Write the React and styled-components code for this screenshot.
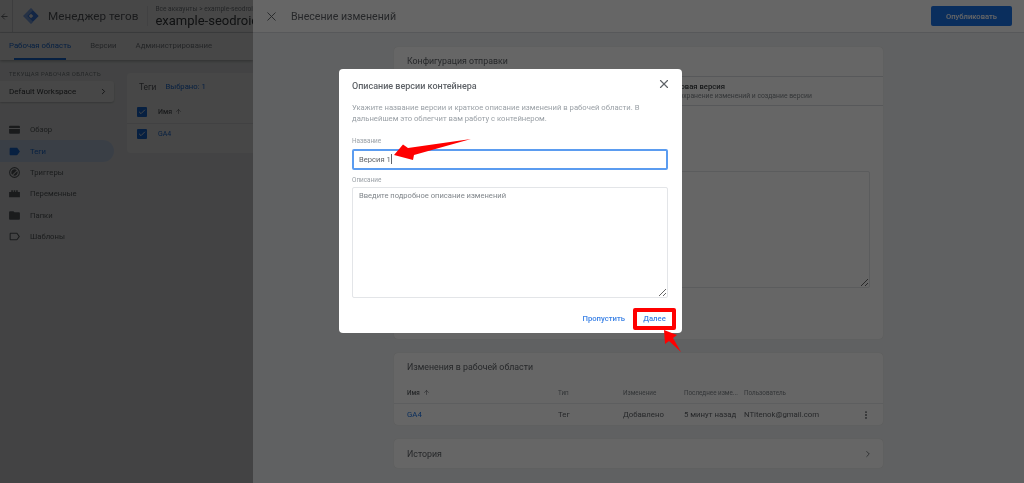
import React from "react";
import styled, { createGlobalStyle } from "styled-components";
import { X, ArrowLeft, ArrowUp, ChevronRight, MoreVertical, Check } from "lucide-react";

const GlobalStyle = createGlobalStyle`
  html, body { margin: 0; padding: 0; height: 100%; }
  body { font-family: Roboto, "Liberation Sans", sans-serif; color: #3c4043; overflow: hidden; }
  * { box-sizing: border-box; }
`;

const Page = styled.div`
  position: relative;
  width: 1024px;
  height: 483px;
  display: grid;
  grid-template-columns: 253px 1fr;
  overflow: hidden;
  filter: blur(0.35px);
`;

const Scrim = styled.div`
  position: absolute;
  inset: 0;
  background: rgba(0, 0, 0, ${(p) => p.$alpha});
`;

/* left: tag manager behind the drawer */
const Workspace = styled.div`
  position: relative;
  background: #f1f3f4;
  overflow: hidden;
`;

const TopBar = styled.div`
  height: 33px;
  display: flex;
  align-items: center;
  background: #fff;
  border-bottom: 1px solid #dadce0;
  white-space: nowrap;
`;

const BackCell = styled.div`
  width: 13px;
  height: 33px;
  flex: none;
  display: flex;
  align-items: center;
  border-right: 1px solid #dadce0;
  color: #5f6368;
`;

const Logo = styled.svg`
  width: 16px;
  height: 16px;
  margin-left: 10px;
  flex: none;
`;

const Product = styled.div`
  margin-left: 9px;
  padding-right: 9px;
  font-size: 11.7px;
  color: #5f6368;
  line-height: 20px;
  border-right: 1px solid #e8eaed;
`;

const Crumbs = styled.div`
  margin-left: 7px;
  display: flex;
  flex-direction: column;
`;

const CrumbTrail = styled.div`
  font-size: 6.6px;
  line-height: 8px;
  color: #80868b;
`;

const CrumbName = styled.div`
  font-size: 13px;
  line-height: 15px;
  color: #3c4043;
`;

const Tabs = styled.div`
  height: 27px;
  display: flex;
  background: #fff;
  padding-left: 9px;
  gap: 19px;
  box-shadow: 0 1px 3px rgba(0, 0, 0, 0.3);
  position: relative;
`;

const Tab = styled.div`
  position: relative;
  font-size: 7.8px;
  line-height: 26px;
  color: ${(p) => (p.$active ? "#1a73e8" : "#80868b")};
  &::after {
    content: "";
    display: ${(p) => (p.$active ? "block" : "none")};
    position: absolute;
    left: 5px;
    right: 5px;
    bottom: 0;
    height: 2px;
    background: #1a73e8;
  }
`;

const WorkBody = styled.div`
  display: flex;
  align-items: flex-start;
`;

const SideColumn = styled.div`
  width: 114px;
  flex: none;
  padding-top: 10px;
`;

const SideLabel = styled.div`
  font-size: 5.9px;
  line-height: 8px;
  letter-spacing: 0.35px;
  padding-left: 9px;
  color: #80868b;
  white-space: nowrap;
`;

const WorkspacePicker = styled.div`
  height: 21px;
  margin-top: 3px;
  padding: 0 6px 0 9px;
  display: flex;
  align-items: center;
  justify-content: space-between;
  background: #fff;
  border-radius: 0 3px 3px 0;
  box-shadow: 0 1px 2px rgba(0, 0, 0, 0.2);
  font-size: 8px;
  color: #3c4043;
`;

const SideNav = styled.div`
  margin-top: 17px;
  display: flex;
  flex-direction: column;
`;

const NavItem = styled.div`
  height: 21.4px;
  display: flex;
  align-items: center;
  gap: 9px;
  padding-left: 8px;
  font-size: 7.7px;
  color: ${(p) => (p.$active ? "#1a73e8" : "#5f6368")};
  background: ${(p) => (p.$active ? "#d2e3fc" : "transparent")};
  border-radius: 0 11px 11px 0;
  svg { width: 13px; height: 13px; flex: none; fill: currentColor; }
`;

const TagsCard = styled.div`
  width: 200px;
  margin: 13px 0 0 13px;
  background: #fff;
  border-radius: 4px;
  flex: none;
  padding-bottom: 9px;
`;

const TagsHead = styled.div`
  height: 27px;
  padding: 0 12px;
  display: flex;
  align-items: center;
  gap: 9px;
  font-size: 8.4px;
  color: #5f6368;
`;

const Selected = styled.span`
  font-size: 7.7px;
  color: #1a73e8;
`;

const TagRow = styled.div`
  height: ${(p) => p.$h}px;
  display: flex;
  align-items: center;
  gap: 11px;
  padding-left: 10px;
  font-size: 7px;
  font-weight: ${(p) => (p.$head ? 500 : 400)};
  color: ${(p) => (p.$head ? "#5f6368" : "#1a73e8")};
  border-bottom: ${(p) => (p.$head ? "1px solid #e8eaed" : "none")};
`;

const CheckBox = styled.span`
  width: 10px;
  height: 10px;
  display: flex;
  align-items: center;
  justify-content: center;
  border-radius: 1px;
  background: #1a73e8;
  color: #fff;
`;

const SortLabel = styled.span`
  display: inline-flex;
  align-items: center;
  gap: 3px;
`;

/* right: submit drawer */
const Drawer = styled.div`
  position: relative;
  background: #f1f3f4;
  height: 483px;
`;

const DrawerHead = styled.div`
  height: 33px;
  display: flex;
  align-items: center;
  padding: 0 12px 0 11px;
  background: #fff;
  border-bottom: 1px solid #dadce0;
  color: #5f6368;
`;

const DrawerTitle = styled.div`
  margin: 1px 0 0 12px;
  font-size: 10.6px;
  color: #5f6368;
  flex: 1;
`;

const Publish = styled.button`
  width: 81px;
  height: 20px;
  border: 0;
  border-radius: 2px;
  background: #1a73e8;
  color: #fff;
  font: 500 7.6px Roboto, sans-serif;
`;

const DrawerBody = styled.div`
  width: 489px;
  margin: 14px auto 0;
  display: flex;
  flex-direction: column;
  gap: 14px;
`;

const Card = styled.section`
  background: #fff;
  border-radius: 4px;
  box-shadow: 0 0 1px rgba(0, 0, 0, 0.15);
  height: ${(p) => p.$h}px;
`;

const CardTitle = styled.div`
  height: ${(p) => p.$h}px;
  padding: 0 13px ${(p) => (p.$flat ? 0 : 2)}px;
  display: flex;
  align-items: center;
  justify-content: space-between;
  font-size: 8.8px;
  color: #5f6368;
`;

const VersionChoice = styled.div`
  height: 30px;
  padding-left: 281px;
  border-top: 1px solid #dadce0;
  border-bottom: 1px solid #dadce0;
  display: flex;
  flex-direction: column;
  justify-content: center;
`;

const ChoiceName = styled.div`
  font-size: 7.7px;
  font-weight: 500;
  line-height: 10px;
  color: #3c4043;
`;

const ChoiceHint = styled.div`
  font-size: 6.8px;
  line-height: 9px;
  color: #80868b;
`;

const BackNotes = styled.textarea`
  display: block;
  width: 463px;
  height: 117px;
  margin: 65px 0 0 13px;
  border: 1px solid #e3e5e8;
  border-radius: 2px;
  background: #fff;
`;

const ChangeGrid = styled.div`
  display: grid;
  grid-template-columns: 151px 65px 61px 60px 1fr 16px;
  align-items: center;
  height: ${(p) => p.$h}px;
  padding: 0 9px 0 13px;
  font-size: ${(p) => (p.$head ? "6.3px" : "7.8px")};
  color: ${(p) => (p.$head ? "#80868b" : "#5f6368")};
  border-bottom: ${(p) => (p.$head ? "1px solid #e8eaed" : "none")};
  white-space: nowrap;
`;

const NameHead = styled(SortLabel)`
  font-weight: 500;
  color: #5f6368;
`;

const BlueLink = styled.span`
  color: #1a73e8;
`;

const RowMenu = styled(MoreVertical)`
  justify-self: center;
`;

const HistoryChevron = styled(ChevronRight)`
  margin-right: -3px;
  color: #5f6368;
`;

/* dialog */
const Modal = styled.div`
  position: absolute;
  left: 339px;
  top: 69px;
  width: 343px;
  height: 264px;
  padding: 0 14px 0 13px;
  background: #fff;
  border-radius: 4px;
  display: flex;
  flex-direction: column;
`;

const ModalHead = styled.div`
  height: 33px;
  flex: none;
  display: flex;
  align-items: center;
  justify-content: space-between;
  font-size: 9px;
  font-weight: 500;
  color: #5f6368;
`;

const CloseIcon = styled(X)`
  color: #5f6368;
  margin: 0 -3px 3px 0;
`;

const Intro = styled.p`
  margin: 0;
  font-size: 7.7px;
  line-height: 11.4px;
  color: #9aa0a6;
`;

const FieldLabel = styled.label`
  display: block;
  font-size: 6.4px;
  line-height: 8px;
  color: #9aa0a6;
  margin-top: ${(p) => p.$top}px;
  margin-bottom: ${(p) => p.$bottom}px;
`;

const NameField = styled.div`
  height: 21px;
  flex: none;
  padding: 0 5px;
  display: flex;
  align-items: center;
  border: 2px solid #5b9cf0;
  border-radius: 2px;
  font-size: 7.6px;
  color: #5f6368;
`;

const Caret = styled.span`
  width: 1px;
  height: 10px;
  background: #5f6368;
`;

const Notes = styled.textarea`
  display: block;
  flex: none;
  width: 100%;
  height: 111px;
  padding: 2px 6px;
  border: 1px solid #e3e5e8;
  border-radius: 2px;
  outline: none;
  font: 7.6px/11px Roboto, sans-serif;
  &::placeholder { color: #80868b; opacity: 1; }
`;

const ModalFoot = styled.div`
  display: flex;
  justify-content: flex-end;
  align-items: center;
  gap: 8px;
  margin: 10px -8px 0 0;
  font-size: 7.7px;
  font-weight: 500;
  color: #3b82e6;
`;

const NextButton = styled.div`
  width: 43px;
  height: 22px;
  display: flex;
  align-items: center;
  justify-content: center;
  border: 4px solid #f00;
  border-radius: 2px;
  background: #fff;
`;

const Pointer = styled.svg`
  position: absolute;
  left: ${(p) => p.$x}px;
  top: ${(p) => p.$y}px;
  width: ${(p) => p.$w}px;
  height: ${(p) => p.$h}px;
`;

const navIcons = {
  overview: <path d="M2 9V6.500C2 5.700 2.700 5 3.500 5h17c.8 0 1.500.7 1.500 1.500V9H2zm0 2h20v7.500c0 .8-.7 1.500-1.500 1.500h-17C2.700 20 2 19.300 2 18.500V11z" />,
  tag: <path d="M17.630 5.840C17.270 5.330 16.670 5 16 5L5 5.010C3.900 5.010 3 5.900 3 7v10c0 1.100.9 1.990 2 1.990L16 19c.67 0 1.270-.33 1.630-.84L22 12l-4.370-6.160z" />,
  trigger: <path fillRule="evenodd" d="M12 2a10 10 0 1 0 0 20 10 10 0 0 0 0-20zm0 2a8 8 0 1 1 0 16 8 8 0 0 1 0-16zm0 2a6 6 0 0 0-4.200 10.300l8.500-8.500A6 6 0 0 0 12 6zm5.300 3.300-8 8A6 6 0 0 0 17.300 9.300z" />,
  variable: <path d="M2 9h4V6h3v3h1.500V6h3v3H15V6h3v3h4v10H2V9z" />,
  folder: <path d="M10 4H4c-1.100 0-1.990.9-1.990 2L2 18c0 1.100.9 2 2 2h16c1.100 0 2-.9 2-2V8c0-1.100-.9-2-2-2h-8l-2-2z" />,
  template: <path d="M17.630 5.840C17.270 5.330 16.670 5 16 5L5 5.010C3.900 5.010 3 5.900 3 7v10c0 1.100.9 1.990 2 1.990L16 19c.67 0 1.270-.33 1.630-.84L22 12l-4.370-6.160zM16 17H5V7h11l3.550 5L16 17z" />,
};

const navItems = [
  ["overview", "Обзор"],
  ["tag", "Теги"],
  ["trigger", "Триггеры"],
  ["variable", "Переменные"],
  ["folder", "Папки"],
  ["template", "Шаблоны"],
];

export default function App() {
  return (
    <>
      <GlobalStyle />
      <Page>
        <Workspace>
          <TopBar>
            <BackCell>
              <ArrowLeft size={9} strokeWidth={2.2} />
            </BackCell>
            <Logo viewBox="0 0 24 24">
              <path d="M12 0.500 23.500 12 12 23.500 0.500 12z" fill="#4285f4" />
              <path d="M12 0.500 15 3.500 6.500 12 15 20.500 12 23.500 0.500 12z" fill="#8ab4f8" />
              <path d="M12 8.500 15.500 12 12 15.500 8.500 12z" fill="#fff" />
            </Logo>
            <Product>Менеджер тегов</Product>
            <Crumbs>
              <CrumbTrail>Все аккаунты &gt; example-seodroid.ru</CrumbTrail>
              <CrumbName>example-seodroid.ru</CrumbName>
            </Crumbs>
          </TopBar>
          <Tabs>
            <Tab $active>Рабочая область</Tab>
            <Tab>Версии</Tab>
            <Tab>Администрирование</Tab>
          </Tabs>
          <WorkBody>
            <SideColumn>
              <SideLabel>ТЕКУЩАЯ РАБОЧАЯ ОБЛАСТЬ</SideLabel>
              <WorkspacePicker>
                Default Workspace
                <ChevronRight size={9} strokeWidth={2.5} />
              </WorkspacePicker>
              <SideNav>
                {navItems.map(([key, label]) => (
                  <NavItem key={key} $active={key === "tag"}>
                    <svg viewBox="0 0 24 24">{navIcons[key]}</svg>
                    {label}
                  </NavItem>
                ))}
              </SideNav>
            </SideColumn>
            <TagsCard>
              <TagsHead>
                Теги <Selected>Выбрано: 1</Selected>
              </TagsHead>
              <TagRow $h={24} $head>
                <CheckBox><Check size={8} strokeWidth={3} /></CheckBox>
                <SortLabel>Имя <ArrowUp size={7} /></SortLabel>
              </TagRow>
              <TagRow $h={20}>
                <CheckBox><Check size={8} strokeWidth={3} /></CheckBox>
                GA4
              </TagRow>
            </TagsCard>
          </WorkBody>
          <Scrim $alpha={0.3} />
        </Workspace>

        <Drawer>
          <DrawerHead>
            <X size={15} strokeWidth={1.5} />
            <DrawerTitle>Внесение изменений</DrawerTitle>
            <Publish>Опубликовать</Publish>
          </DrawerHead>
          <DrawerBody>
            <Card $h={292}>
              <CardTitle $h={29}>Конфигурация отправки</CardTitle>
              <VersionChoice>
                <ChoiceName>Новая версия</ChoiceName>
                <ChoiceHint>Сохранение изменений и создание версии</ChoiceHint>
              </VersionChoice>
              <BackNotes disabled />
            </Card>
            <Card $h={72}>
              <CardTitle $h={29}>Изменения в рабочей области</CardTitle>
              <ChangeGrid $h={22} $head>
                <NameHead>Имя <ArrowUp size={7} /></NameHead>
                <span>Тип</span>
                <span>Изменение</span>
                <span>Последнее изме...</span>
                <span>Пользователь</span>
                <span />
              </ChangeGrid>
              <ChangeGrid $h={21}>
                <BlueLink>GA4</BlueLink>
                <span>Тег</span>
                <span>Добавлено</span>
                <span>5 минут назад</span>
                <span>NTitenok@gmail.com</span>
                <RowMenu size={10} strokeWidth={2.5} />
              </ChangeGrid>
            </Card>
            <Card $h={29}>
              <CardTitle $h={29} $flat>
                История
                <HistoryChevron size={10} />
              </CardTitle>
            </Card>
          </DrawerBody>
        </Drawer>

        <Scrim $alpha={0.6} />

        <Modal>
          <ModalHead>
            Описание версии контейнера
            <CloseIcon size={14} strokeWidth={2} />
          </ModalHead>
          <Intro>
            Укажите название версии и краткое описание изменений в рабочей области. В
            дальнейшем это облегчит вам работу с контейнером.
          </Intro>
          <FieldLabel $top={12} $bottom={4}>Название</FieldLabel>
          <NameField>
            Версия 1<Caret />
          </NameField>
          <FieldLabel $top={6} $bottom={3}>Описание</FieldLabel>
          <Notes placeholder="Введите подробное описание изменений" readOnly />
          <ModalFoot>
            <span>Пропустить</span>
            <NextButton>Далее</NextButton>
          </ModalFoot>
        </Modal>

        <Pointer $x={390} $y={135} $w={85} $h={30} viewBox="390 135 85 30">
          <path d="M394 155 403 144.500 408 148 471 139 414 155 413 160z" fill="#f00" />
        </Pointer>
        <Pointer $x={660} $y={326} $w={24} $h={28} viewBox="660 326 24 28">
          <path d="M664 330 677 335 673 338 681 352 669 341 665 344z" fill="#f00" />
        </Pointer>
      </Page>
    </>
  );
}
